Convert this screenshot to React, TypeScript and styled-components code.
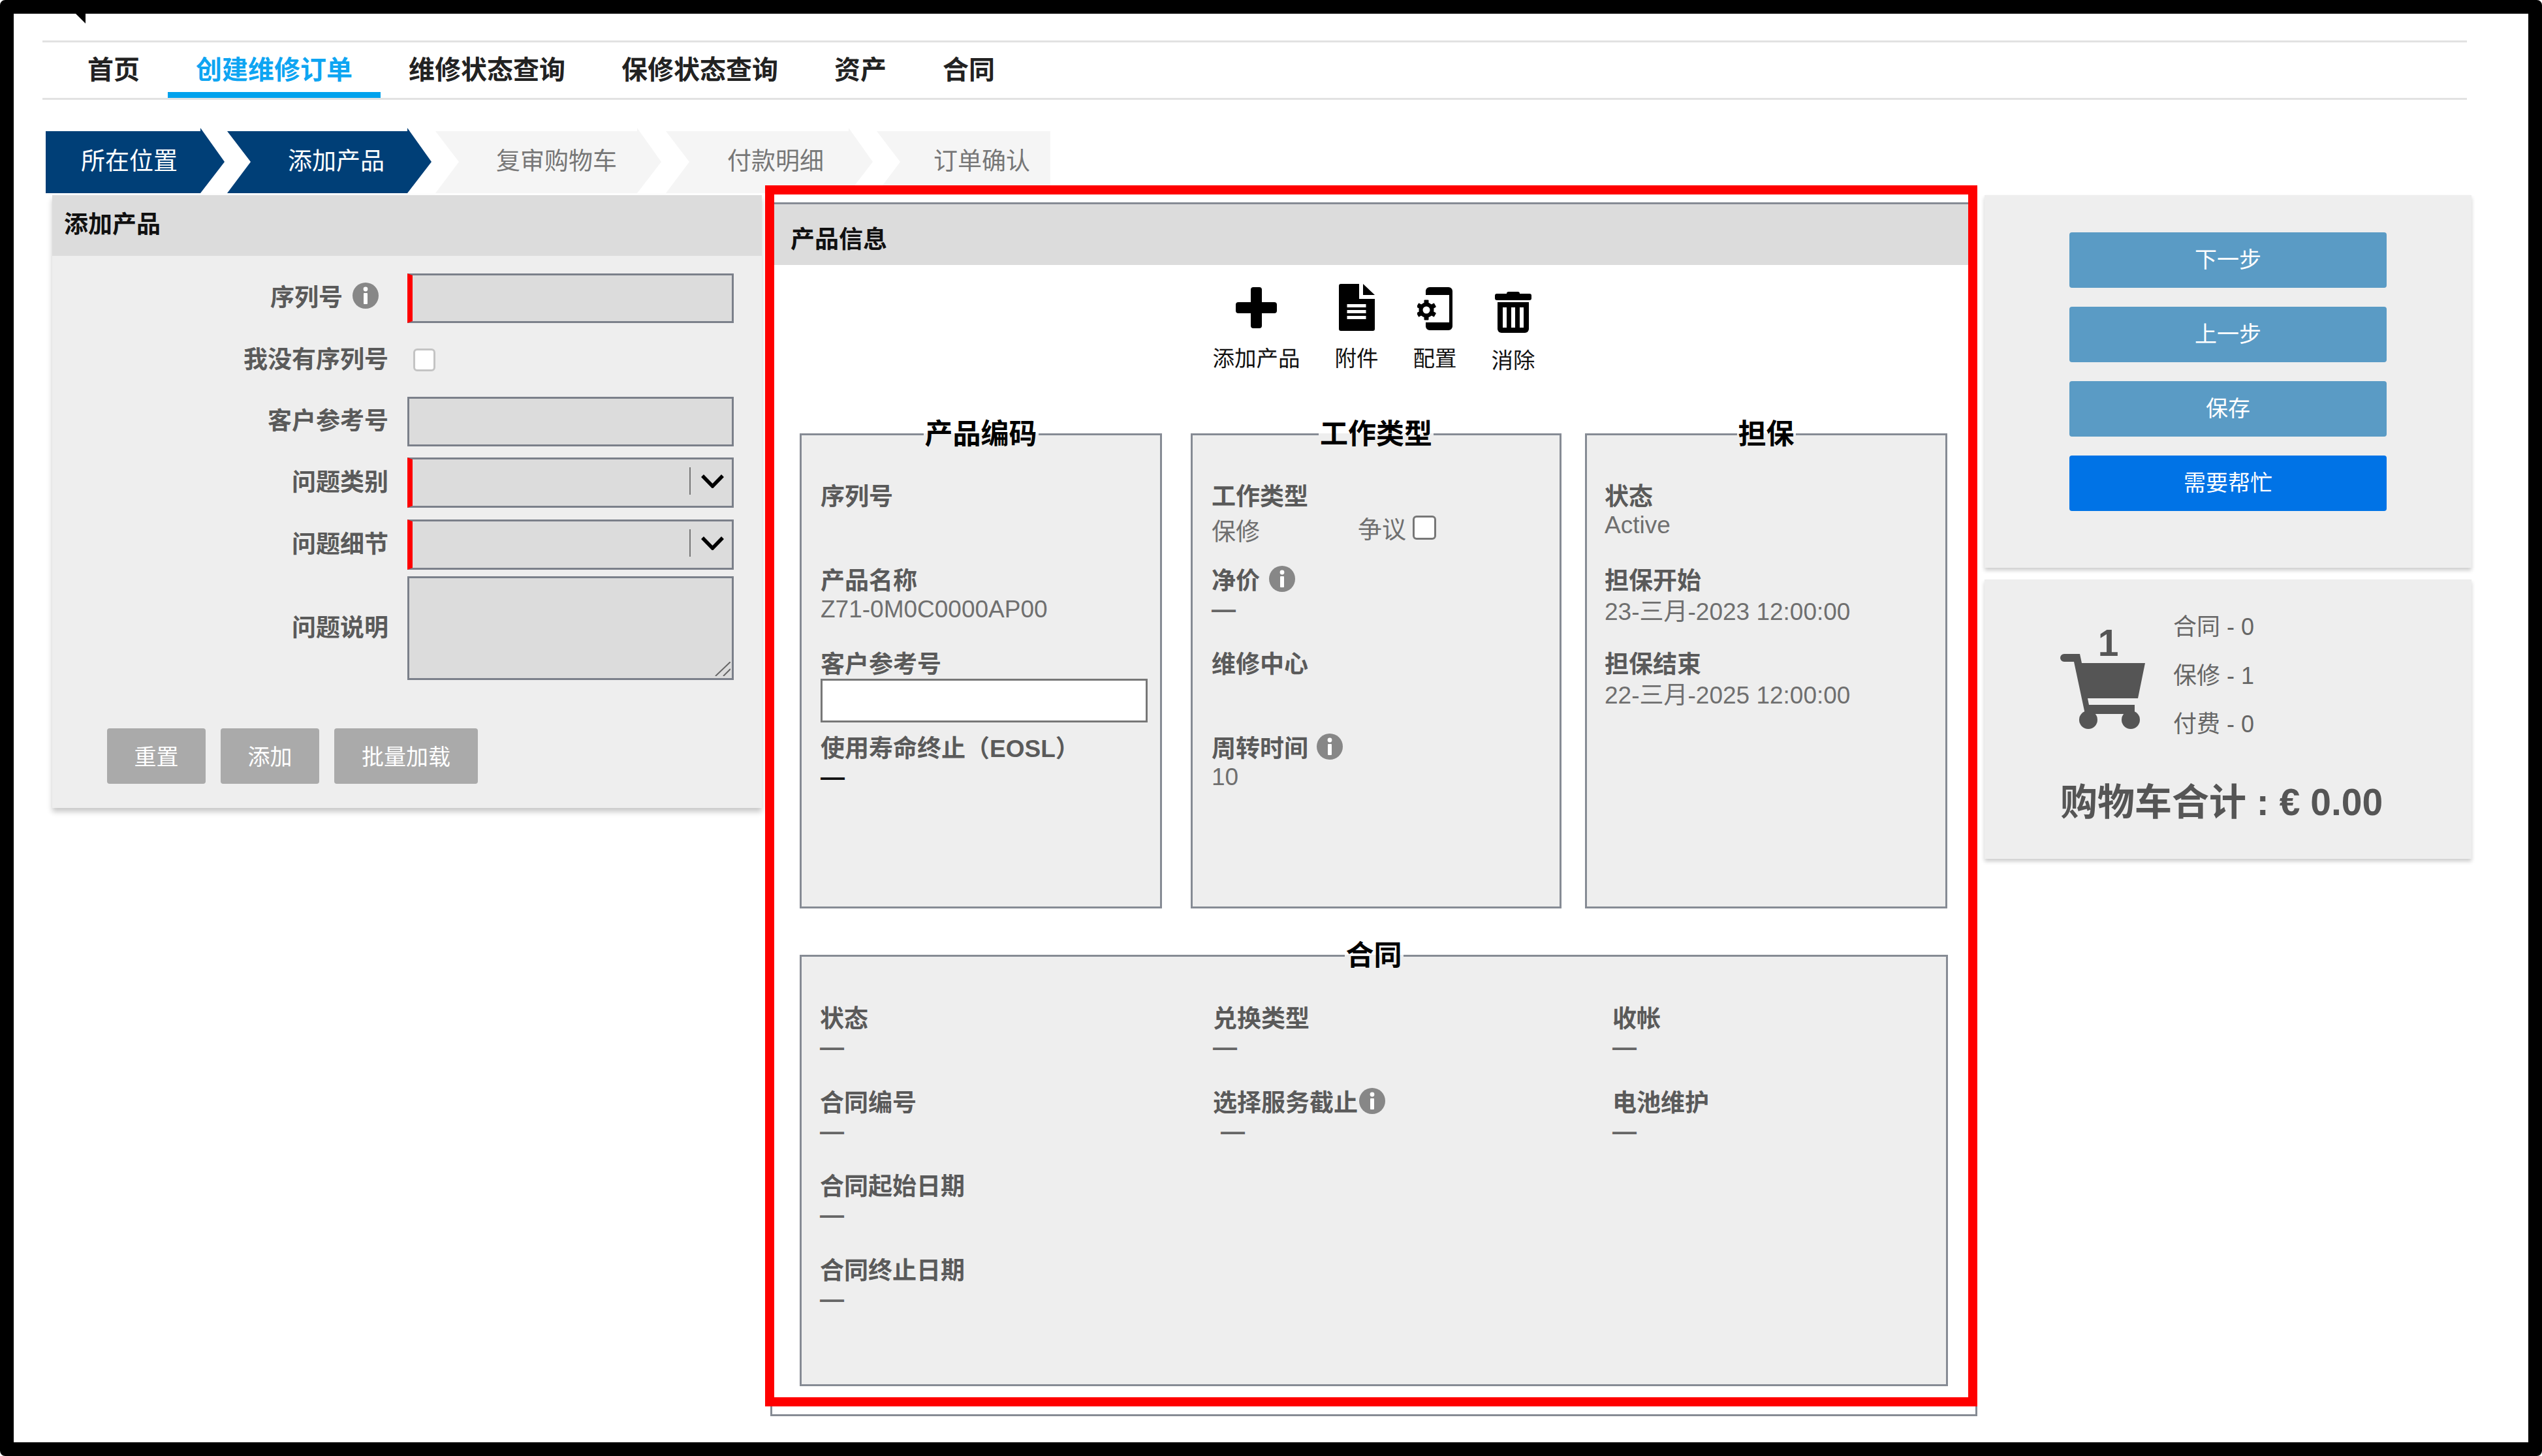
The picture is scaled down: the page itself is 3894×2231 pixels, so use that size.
import React from "react";
import styled, { createGlobalStyle } from "styled-components";

const Global = createGlobalStyle`
  html, body { margin: 0; padding: 0; background: #fff; }
  body { font-family: "Liberation Sans", "Noto Sans CJK SC", sans-serif; font-size: 37px; color: #555; }
  * { box-sizing: border-box; }
`;

const Frame = styled.div`
  position: relative;
  width: 3894px;
  height: 2231px;
  border: 21px solid #000;
  border-radius: 8px;
  background: #fff;
  overflow: hidden;
`;
const CornerMark = styled.div`
  position: absolute;
  left: 95px;
  top: 0;
  width: 15px;
  height: 15px;
  background: #000;
  clip-path: polygon(0 0, 100% 0, 100% 100%);
`;

const Nav = styled.nav`
  display: flex;
  margin: 41px 0 0 44px;
  width: 3714px;
  height: 91px;
  padding-left: 26px;
  border-top: 3px solid #e2e2e2;
  border-bottom: 3px solid #e2e2e2;
`;
const Tab = styled.a<{ $active?: boolean }>`
  height: 85px;
  padding: 7px 43px 0;
  line-height: 70px;
  font-size: 40px;
  font-weight: 700;
  color: ${(p) => (p.$active ? "#0ea5f2" : "#222")};
  border-bottom: 9px solid ${(p) => (p.$active ? "#00a2ed" : "transparent")};
`;

const Steps = styled.div`
  display: flex;
  margin: 43px 0 0 49px;
  height: 100px;
`;
const Step = styled.div<{ $w: number; $pl: number; $ml?: number; $on?: boolean; $first?: boolean; $last?: boolean }>`
  width: ${(p) => p.$w}px;
  margin-left: ${(p) => p.$ml ?? 0}px;
  padding: 5px 0 0 ${(p) => p.$pl}px;
  line-height: 93px;
  font-size: 37px;
  white-space: nowrap;
  background: ${(p) => (p.$on ? "#003f77" : "#f5f5f5")};
  color: ${(p) => (p.$on ? "#fff" : "#777")};
  clip-path: polygon(
    0 5px,
    ${(p) =>
      p.$last
        ? "100% 5px, 100% 100%"
        : "calc(100% - 37px) 5px, calc(100% - 37px) 0, 100% 52px, calc(100% - 37px) 100%"},
    0 100%
    ${(p) => (p.$first ? "" : ", 36px 52px")}
  );
`;

const Main = styled.main`
  display: flex;
  align-items: flex-start;
  margin: 3px 0 0 59px;
`;

const FormPanel = styled.section`
  width: 1087px;
  background: #eee;
  box-shadow: 0 6px 8px rgba(0, 0, 0, 0.22);
`;
const FormHead = styled.h2`
  margin: 0;
  height: 93px;
  padding-left: 18px;
  line-height: 92px;
  font-size: 37px;
  font-weight: 700;
  color: #111;
  background: #dcdcdc;
`;
const FormBody = styled.div`
  padding: 27px 0 37px;
`;
const Row = styled.div<{ $h: number; $mt?: number }>`
  display: flex;
  align-items: center;
  height: ${(p) => p.$h}px;
  margin-top: ${(p) => p.$mt ?? 0}px;
`;
const RowLabel = styled.label<{ $pr?: number }>`
  display: flex;
  align-items: center;
  justify-content: flex-end;
  width: 515px;
  padding-right: ${(p) => p.$pr ?? 0}px;
  padding-bottom: 8px;
  margin-right: 29px;
  font-weight: 700;
  color: #5a5a5a;
  white-space: nowrap;
`;
const TextBox = styled.input<{ $required?: boolean }>`
  width: 500px;
  height: 100%;
  background: #dcdcdc;
  border: 3px solid #7b808a;
  border-left: ${(p) => (p.$required ? "8px solid #f00" : "3px solid #7b808a")};
  border-radius: 0;
  outline: none;
`;
const SelectBox = styled.div`
  display: flex;
  align-items: center;
  justify-content: flex-end;
  width: 500px;
  height: 100%;
  padding: 0 11px 5px 0;
  background: #dcdcdc;
  border: 3px solid #7b808a;
  border-left: 8px solid #f00;
`;
const SelectSep = styled.span`
  width: 2px;
  height: 42px;
  margin-right: 15px;
  background: #777;
`;
const AreaWrap = styled.div`
  position: relative;
  width: 500px;
  height: 100%;
`;
const AreaBox = styled.textarea`
  display: block;
  width: 100%;
  height: 100%;
  background: #dcdcdc;
  border: 3px solid #7b808a;
  border-radius: 0;
  outline: none;
  resize: none;
`;
const AreaGrip = styled.svg`
  position: absolute;
  right: 5px;
  bottom: 6px;
  width: 24px;
  height: 22px;
`;
const Check = styled.input.attrs({ type: "checkbox" })<{ $dark?: boolean }>`
  appearance: none;
  display: block;
  width: ${(p) => (p.$dark ? 36 : 34)}px;
  height: ${(p) => (p.$dark ? 37 : 35)}px;
  margin: 0 0 0 ${(p) => (p.$dark ? 10 : 9)}px;
  background: #fff;
  border: ${(p) => (p.$dark ? "3px solid #777" : "3px solid #c4c4c4")};
  border-radius: 6px;
`;
const FormActions = styled.div`
  display: flex;
  gap: 23px;
  margin-top: 74px;
  padding-left: 84px;
`;
const GreyButton = styled.button<{ $w: number }>`
  width: ${(p) => p.$w}px;
  height: 85px;
  padding: 0 0 3px;
  border: 0;
  border-radius: 4px;
  background: #aaa;
  color: #fff;
  font: inherit;
  font-size: 34px;
`;

const ProductPanel = styled.section`
  position: relative;
  width: 1849px;
  margin: 11px 0 0 13px;
  padding-bottom: 43px;
  border: 3px solid #868b94;
  background: #fff;
`;
const RedOutline = styled.div`
  position: absolute;
  left: -11px;
  top: -29px;
  width: 1857px;
  height: 1871px;
  border: 14px solid #f00;
  pointer-events: none;
`;
const ProductHead = styled.h2`
  margin: 0;
  height: 93px;
  padding: 13px 0 0 28px;
  line-height: 83px;
  font-size: 37px;
  font-weight: 700;
  color: #111;
  background: #dcdcdc;
`;
const Toolbar = styled.div`
  display: flex;
  justify-content: center;
  gap: 53px;
  padding-top: 29px;
`;
const ToolItem = styled.button`
  display: flex;
  flex-direction: column;
  align-items: center;
  padding: 0;
  border: 0;
  background: none;
  font: inherit;
`;
const ToolLabel = styled.span<{ $mt?: number }>`
  display: block;
  margin-top: ${(p) => 16 + (p.$mt ?? 0)}px;
  line-height: 48px;
  font-size: 33.5px;
  color: #111;
  white-space: nowrap;
`;
const ToolIcon = styled.svg`
  display: block;
  height: 75px;
  fill: #000;
`;

const Boxes = styled.div`
  display: flex;
  margin: 64px 0 0 42px;
`;
const Box = styled.fieldset<{ $w: number; $h: number; $ml?: number; $pt?: number; $mt?: number; $pl?: number }>`
  display: block;
  width: ${(p) => p.$w}px;
  height: ${(p) => p.$h}px;
  min-width: 0;
  margin: ${(p) => p.$mt ?? 0}px 0 0 ${(p) => p.$ml ?? 0}px;
  padding: ${(p) => p.$pt ?? 47}px ${(p) => p.$pl ?? 29}px 0;
  border: 3px solid #868b94;
  background: #eee;
`;
const BoxTitle = styled.legend`
  margin: 0 auto;
  padding: 0 2px;
  line-height: 48px;
  font-size: 43px;
  font-weight: 700;
  color: #000;
`;
const Field = styled.div`
  height: 128.5px;
`;
const FieldLabel = styled.div`
  display: flex;
  align-items: center;
  height: 44px;
  font-weight: 700;
  color: #5a5a5a;
  white-space: nowrap;
`;
const FieldValue = styled.div<{ $ml?: number; $mt?: number }>`
  height: 46px;
  line-height: 46px;
  margin: ${(p) => p.$mt ?? 2}px 0 0 ${(p) => p.$ml ?? 0}px;
  color: #6f6f6f;
  white-space: nowrap;
`;
const Dash = styled(FieldValue)<{ $strong?: boolean }>`
  font-weight: 700;
  color: ${(p) => (p.$strong ? "#111" : "#666")};
`;
const InlineValue = styled.div<{ $mt: number; $w?: number }>`
  width: ${(p) => (p.$w ? `${p.$w}px` : "auto")};
  margin-top: ${(p) => p.$mt}px;
  line-height: 44px;
  color: #6f6f6f;
  white-space: nowrap;
`;
const WorkTypeRow = styled.div`
  display: flex;
  align-items: flex-start;
`;
const DisputeCheck = styled.div`
  margin-top: 10px;
`;
const WhiteInput = styled.input`
  display: block;
  width: 501px;
  height: 67px;
  margin-top: 3px;
  background: #fff;
  border: 3px solid #777;
  border-radius: 0;
  outline: none;
`;
const ContractGrid = styled.div`
  display: grid;
  grid-template-columns: 602px 612px 1fr;
`;
const InfoSvg = styled.svg<{ $ml: number }>`
  display: block;
  flex: none;
  width: 40px;
  height: 40px;
  margin-left: ${(p) => p.$ml}px;
`;

const SideColumn = styled.div`
  width: 746px;
  margin-left: 11px;
`;
const SideCard = styled.section<{ $h: number; $mt?: number }>`
  height: ${(p) => p.$h}px;
  margin-top: ${(p) => p.$mt ?? 0}px;
  background: #eee;
  box-shadow: 0 4px 6px rgba(0, 0, 0, 0.2);
`;
const ActionStack = styled.div`
  display: flex;
  flex-direction: column;
  align-items: center;
  gap: 29px;
  padding-top: 57px;
`;
const ActionButton = styled.button<{ $help?: boolean }>`
  width: 486px;
  height: 85px;
  padding: 0 0 6px;
  border: 0;
  border-radius: 4px;
  background: ${(p) => (p.$help ? "#0073e6" : "#5a9bc5")};
  color: #fff;
  font: inherit;
  font-size: 34px;
`;
const CartTop = styled.div`
  display: flex;
  gap: 43px;
  padding: 36px 0 0 116px;
`;
const CartFigure = styled.div`
  display: flex;
  flex-direction: column;
  align-items: center;
  width: 130px;
  padding-top: 41px;
`;
const CartCount = styled.div`
  margin-left: 17px;
  height: 37px;
  line-height: 40px;
  font-size: 57px;
  font-weight: 700;
  color: #555;
`;
const CartSvg = styled.svg`
  display: block;
  width: 130px;
  height: 115px;
  fill: #555;
`;
const CartLines = styled.div`
  line-height: 74.5px;
  font-size: 36px;
  color: #666;
  white-space: nowrap;
`;
const CartTotal = styled.div`
  margin-top: 46px;
  padding-left: 116px;
  line-height: 70px;
  font-size: 57px;
  font-weight: 700;
  color: #555;
  white-space: nowrap;
`;
const LabelSpacer = styled.span`
  width: 15px;
`;

const Info = ({ ml }: { ml: number }) => (
  <InfoSvg $ml={ml} viewBox="0 0 40 40">
    <circle cx="20" cy="20" r="20" fill="#878787" />
    <circle cx="20" cy="10" r="3.4" fill="#fff" />
    <rect x="17" y="16" width="6" height="17" rx="1" fill="#fff" />
  </InfoSvg>
);

const Chevron = () => (
  <svg width="37" height="22" viewBox="0 0 37 22" fill="none">
    <path d="M3 3 L18.5 19 L34 3" stroke="#000" strokeWidth="5.5" />
  </svg>
);

const PlusIcon = () => (
  <ToolIcon viewBox="0 0 63 75" width="63">
    <rect x="23" y="5" width="17" height="63" rx="4" />
    <rect x="0" y="28" width="63" height="17" rx="4" />
  </ToolIcon>
);
const DocIcon = () => (
  <ToolIcon viewBox="0 0 55 75" width="55">
    <path d="M3 0H31V23H55V69a3 3 0 0 1-3 3H3a3 3 0 0 1-3-3V3a3 3 0 0 1 3-3Z" />
    <path d="M37 0L55 17H37Z" />
    <rect x="12.5" y="31" width="29" height="5" fill="#fff" />
    <rect x="12.5" y="40" width="29" height="5" fill="#fff" />
    <rect x="12.5" y="49" width="29" height="5" fill="#fff" />
  </ToolIcon>
);
const GearPhoneIcon = () => (
  <ToolIcon viewBox="0 0 54 75" width="54">
    <path d="M19 5H48a6 6 0 0 1 6 6V65a6 6 0 0 1-6 6H19a6 6 0 0 1-6-6V59H49V17H13V11a6 6 0 0 1 6-6Z" />
    <rect x="9" y="17" width="40" height="42" fill="#fff" />
    <g transform="translate(14 40)">
      <circle r="11.5" />
      {[0, 60, 120, 180, 240, 300].map((a) => (
        <rect key={a} x="-3.5" y="-15.5" width="7" height="7" rx="1" transform={`rotate(${a})`} />
      ))}
      <circle r="5.5" fill="#fff" />
    </g>
  </ToolIcon>
);
const TrashIcon = () => (
  <ToolIcon viewBox="0 0 56 75" width="56">
    <rect x="18" y="12" width="20" height="6" rx="3" />
    <rect x="0" y="15" width="56" height="10" rx="3" />
    <path d="M4 28H52V69a6 6 0 0 1-6 6H10a6 6 0 0 1-6-6Z" />
    <rect x="12" y="36" width="6" height="31" fill="#fff" />
    <rect x="25" y="36" width="6" height="31" fill="#fff" />
    <rect x="38" y="36" width="6" height="31" fill="#fff" />
  </ToolIcon>
);

const tabs = ["首页", "创建维修订单", "维修状态查询", "保修状态查询", "资产", "合同"];

export default function App() {
  return (
    <>
      <Global />
      <Frame>
        <CornerMark />
        <Nav>
          {tabs.map((t, i) => (
            <Tab key={t} $active={i === 1}>
              {t}
            </Tab>
          ))}
        </Nav>
        <Steps>
          <Step $w={274} $pl={54} $on $first>所在位置</Step>
          <Step $w={313} $pl={93} $ml={4} $on>添加产品</Step>
          <Step $w={346} $pl={93} $ml={6}>复审购物车</Step>
          <Step $w={317} $pl={94} $ml={7}>付款明细</Step>
          <Step $w={266} $pl={87} $ml={6} $last>订单确认</Step>
        </Steps>
        <Main>
          <FormPanel>
            <FormHead>添加产品</FormHead>
            <FormBody>
              <Row $h={76}>
                <RowLabel>
                  序列号
                  <Info ml={15} />
                  <LabelSpacer />
                </RowLabel>
                <TextBox $required />
              </Row>
              <Row $h={113}>
                <RowLabel>我没有序列号</RowLabel>
                <Check />
              </Row>
              <Row $h={76}>
                <RowLabel>客户参考号</RowLabel>
                <TextBox />
              </Row>
              <Row $h={77} $mt={17}>
                <RowLabel>问题类别</RowLabel>
                <SelectBox>
                  <SelectSep />
                  <Chevron />
                </SelectBox>
              </Row>
              <Row $h={77} $mt={18}>
                <RowLabel>问题细节</RowLabel>
                <SelectBox>
                  <SelectSep />
                  <Chevron />
                </SelectBox>
              </Row>
              <Row $h={159} $mt={10}>
                <RowLabel>问题说明</RowLabel>
                <AreaWrap>
                  <AreaBox />
                  <AreaGrip viewBox="0 0 24 22" fill="none" stroke="#666" strokeWidth="2">
                    <path d="M1 22L24 0M13 22L24 11" />
                  </AreaGrip>
                </AreaWrap>
              </Row>
              <FormActions>
                <GreyButton $w={151}>重置</GreyButton>
                <GreyButton $w={151}>添加</GreyButton>
                <GreyButton $w={220}>批量加载</GreyButton>
              </FormActions>
            </FormBody>
          </FormPanel>

          <ProductPanel>
            <ProductHead>产品信息</ProductHead>
            <Toolbar>
              <ToolItem>
                <PlusIcon />
                <ToolLabel>添加产品</ToolLabel>
              </ToolItem>
              <ToolItem>
                <DocIcon />
                <ToolLabel>附件</ToolLabel>
              </ToolItem>
              <ToolItem>
                <GearPhoneIcon />
                <ToolLabel>配置</ToolLabel>
              </ToolItem>
              <ToolItem>
                <TrashIcon />
                <ToolLabel $mt={3}>消除</ToolLabel>
              </ToolItem>
            </Toolbar>
            <Boxes>
              <Box $w={555} $h={751}>
                <BoxTitle>产品编码</BoxTitle>
                <Field>
                  <FieldLabel>序列号</FieldLabel>
                </Field>
                <Field>
                  <FieldLabel>产品名称</FieldLabel>
                  <FieldValue>Z71-0M0C0000AP00</FieldValue>
                </Field>
                <Field>
                  <FieldLabel>客户参考号</FieldLabel>
                  <WhiteInput />
                </Field>
                <Field>
                  <FieldLabel>使用寿命终止（EOSL）</FieldLabel>
                  <Dash $strong>—</Dash>
                </Field>
              </Box>
              <Box $w={568} $h={751} $ml={44}>
                <BoxTitle>工作类型</BoxTitle>
                <Field>
                  <FieldLabel>工作类型</FieldLabel>
                  <WorkTypeRow>
                    <InlineValue $mt={14} $w={224}>保修</InlineValue>
                    <InlineValue $mt={11}>争议</InlineValue>
                    <DisputeCheck>
                      <Check $dark />
                    </DisputeCheck>
                  </WorkTypeRow>
                </Field>
                <Field>
                  <FieldLabel>
                    净价
                    <Info ml={14} />
                  </FieldLabel>
                  <Dash>—</Dash>
                </Field>
                <Field>
                  <FieldLabel>维修中心</FieldLabel>
                </Field>
                <Field>
                  <FieldLabel>
                    周转时间
                    <Info ml={13} />
                  </FieldLabel>
                  <FieldValue>10</FieldValue>
                </Field>
              </Box>
              <Box $w={555} $h={751} $ml={36} $pl={27}>
                <BoxTitle>担保</BoxTitle>
                <Field>
                  <FieldLabel>状态</FieldLabel>
                  <FieldValue>Active</FieldValue>
                </Field>
                <Field>
                  <FieldLabel>担保开始</FieldLabel>
                  <FieldValue $mt={6}>23-三月-2023 12:00:00</FieldValue>
                </Field>
                <Field>
                  <FieldLabel>担保结束</FieldLabel>
                  <FieldValue $mt={6}>22-三月-2025 12:00:00</FieldValue>
                </Field>
              </Box>
            </Boxes>
            <Box $w={1759} $h={684} $ml={42} $mt={48} $pt={48} $pl={28}>
              <BoxTitle>合同</BoxTitle>
              <ContractGrid>
                <Field>
                  <FieldLabel>状态</FieldLabel>
                  <Dash>—</Dash>
                </Field>
                <Field>
                  <FieldLabel>兑换类型</FieldLabel>
                  <Dash>—</Dash>
                </Field>
                <Field>
                  <FieldLabel>收帐</FieldLabel>
                  <Dash>—</Dash>
                </Field>
                <Field>
                  <FieldLabel>合同编号</FieldLabel>
                  <Dash>—</Dash>
                </Field>
                <Field>
                  <FieldLabel>
                    选择服务截止
                    <Info ml={2} />
                  </FieldLabel>
                  <Dash $ml={12}>—</Dash>
                </Field>
                <Field>
                  <FieldLabel>电池维护</FieldLabel>
                  <Dash>—</Dash>
                </Field>
                <Field>
                  <FieldLabel>合同起始日期</FieldLabel>
                  <Dash>—</Dash>
                </Field>
                <Field />
                <Field />
                <Field>
                  <FieldLabel>合同终止日期</FieldLabel>
                  <Dash>—</Dash>
                </Field>
              </ContractGrid>
            </Box>
            <RedOutline />
          </ProductPanel>

          <SideColumn>
            <SideCard $h={571}>
              <ActionStack>
                <ActionButton>下一步</ActionButton>
                <ActionButton>上一步</ActionButton>
                <ActionButton>保存</ActionButton>
                <ActionButton $help>需要帮忙</ActionButton>
              </ActionStack>
            </SideCard>
            <SideCard $h={428} $mt={18}>
              <CartTop>
                <CartFigure>
                  <CartCount>1</CartCount>
                  <CartSvg viewBox="0 0 130 115">
                    <path d="M6 0H30L33 14H130L119 68H42L44 78H114V92H38L21 12H6A6 6 0 0 1 6 0Z" />
                    <circle cx="43" cy="101" r="14" />
                    <circle cx="108" cy="101" r="14" />
                  </CartSvg>
                </CartFigure>
                <CartLines>
                  <div>合同 - 0</div>
                  <div>保修 - 1</div>
                  <div>付费 - 0</div>
                </CartLines>
              </CartTop>
              <CartTotal>购物车合计 : € 0.00</CartTotal>
            </SideCard>
          </SideColumn>
        </Main>
      </Frame>
    </>
  );
}
